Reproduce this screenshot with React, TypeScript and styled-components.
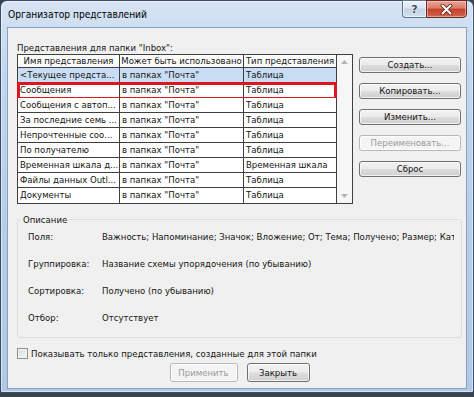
import React from "react";
import styled, { createGlobalStyle, css } from "styled-components";

const FONT = `"DejaVu Sans Condensed", "Liberation Sans", sans-serif`;
const GRID = "#3f3f3f";
const FS = "9.5px";

const Global = createGlobalStyle`
  html, body { margin: 0; padding: 0; background: #39434e; }
  body { font-family: ${FONT}; }
  #root { width: 474px; height: 397px; }
`;

const Window = styled.div`
  box-sizing: border-box;
  width: 474px;
  height: 393px;
  display: flex;
  flex-direction: column;
  padding: 0 6px 3px;
  border: 1px solid #3b4d63;
  border-radius: 7px 7px 2px 2px;
  background: linear-gradient(180deg, #d6e4f4 0%, #c2d7ee 18%, #b6cde8 60%, #b0c9e6 100%);
  box-shadow: inset 0 0 0 1px rgba(255, 255, 255, 0.5);
`;

const TitleBar = styled.div`
  height: 26px;
  display: flex;
  align-items: flex-start;
  justify-content: space-between;
`;

const Title = styled.div`
  margin-top: 7px;
  padding-left: 1px;
  font-size: 10.1px;
  line-height: 13px;
  color: #000;
`;

const CaptionButtons = styled.div`
  display: flex;
  margin-top: -1px;
`;

const CaptionButton = styled.div<{ $variant: "help" | "close" }>`
  box-sizing: border-box;
  height: 18px;
  display: flex;
  align-items: center;
  justify-content: center;
  ${({ $variant }) =>
    $variant === "help"
      ? css`
          width: 24px;
          border: 1px solid #5f7590;
          border-right: none;
          border-radius: 0 0 0 4px;
          background: linear-gradient(180deg, #eef3f9 0%, #dae4f0 45%, #c3d3e5 50%, #d2dfed 100%);
          box-shadow: inset 0 0 0 1px rgba(255, 255, 255, 0.6);
          color: #3a4d63;
          font-family: "DejaVu Sans", sans-serif;
          font-weight: bold;
          font-size: 11px;
          text-shadow: 0 0 2px #fff, 0 0 1px #fff;
        `
      : css`
          width: 41px;
          border: 1px solid #6a2a22;
          border-radius: 0 0 4px 0;
          background: linear-gradient(180deg, #eaa597 0%, #dc7c69 45%, #c4402a 50%, #d1654f 100%);
          box-shadow: inset 0 0 0 1px rgba(255, 220, 210, 0.5);
        `}
`;

const Client = styled.div`
  flex: 1;
  display: flex;
  flex-direction: column;
  border: 1px solid #86a0bf;
  background: #f0f0f0;
  padding: 13px 4px 6px 9px;
  font-size: ${FS};
  line-height: 13px;
  color: #151515;
`;

const Caption = styled.div`
  height: 13px;
  white-space: nowrap;
`;

const MainRow = styled.div`
  display: flex;
  gap: 6px;
`;

const ListView = styled.div`
  box-sizing: border-box;
  width: 336px;
  display: flex;
  border: 1px solid ${GRID};
  background: #fff;
`;

const Table = styled.div`
  display: flex;
  flex-direction: column;
  width: 319px;
`;

const COLS = "102px 124px 93px";

const HeaderRow = styled.div`
  display: grid;
  grid-template-columns: ${COLS};
  height: 13px;
  background: linear-gradient(180deg, #ffffff 0%, #f6f7f9 100%);
`;

const HeaderCell = styled.div`
  box-sizing: border-box;
  border-right: 1px solid ${GRID};
  border-bottom: 1px solid ${GRID};
  text-align: center;
  line-height: 12px;
  white-space: nowrap;
  overflow: hidden;
`;

const Row = styled.div<{ $selected?: boolean }>`
  position: relative;
  display: grid;
  grid-template-columns: ${COLS};
  height: 15px;
  background: ${({ $selected }) => ($selected ? "#c9def5" : "#fff")};
  &:last-child > div {
    border-bottom: none;
  }
`;

const Cell = styled.div`
  box-sizing: border-box;
  border-right: 1px solid ${GRID};
  border-bottom: 1px solid ${GRID};
  padding-left: 2px;
  line-height: 14px;
  white-space: nowrap;
  overflow: hidden;
`;

const Highlight = styled.div`
  position: absolute;
  top: -1px;
  bottom: -2px;
  left: -1px;
  right: 0;
  border: 3px solid #e0141e;
  pointer-events: none;
`;

const ScrollBar = styled.div`
  flex: 1;
  display: flex;
  flex-direction: column;
  justify-content: space-between;
  align-items: center;
  background: #f6f6f6;
  padding: 5px 0;
`;

const SideButtons = styled.div`
  display: flex;
  flex-direction: column;
  gap: 10px;
  padding-top: 3px;
`;

const Button = styled.button<{ $w?: number; $h?: number }>`
  box-sizing: border-box;
  width: ${({ $w }) => $w ?? 102}px;
  height: ${({ $h }) => $h ?? 16}px;
  padding: 0;
  margin: 0;
  border: 1px solid #707070;
  border-radius: 3px;
  background: linear-gradient(180deg, #f3f3f3 0%, #ebebeb 48%, #dddddd 52%, #cfcfcf 100%);
  box-shadow: inset 0 0 0 1px rgba(255, 255, 255, 0.7);
  font-family: ${FONT};
  font-size: ${FS};
  line-height: 12px;
  color: #151515;
  &:disabled {
    border-color: #b5b9bc;
    background: #f4f4f4;
    color: #9a9a9a;
  }
`;

const Group = styled.fieldset`
  margin: 9px 0 0;
  padding: 4px 0 13px 10px;
  border: 1px solid #d5dfe5;
  border-radius: 3px;
  min-width: 0;
  display: flex;
  flex-direction: column;
  gap: 14px;
`;

const Legend = styled.legend`
  padding: 0 2px;
  margin-left: -7px;
  font-size: ${FS};
  line-height: 13px;
`;

const InfoRow = styled.div`
  display: grid;
  grid-template-columns: 74px 352px;
  height: 13px;
`;

const InfoValue = styled.div`
  white-space: nowrap;
  overflow: hidden;
`;

const CheckRow = styled.label`
  margin-top: 9px;
  display: flex;
  align-items: center;
  gap: 3px;
  height: 13px;
  white-space: nowrap;
`;

const CheckBox = styled.span`
  box-sizing: border-box;
  width: 11px;
  height: 11px;
  border: 1px solid #8f8f8f;
  background: linear-gradient(135deg, #dcdcdc 0%, #f6f6f6 100%);
  box-shadow: inset 0 0 0 1px #f4f4f4;
`;

const Footer = styled.div`
  margin-top: 3px;
  display: flex;
  justify-content: center;
  gap: 9px;
`;

const rows: [string, string, string][] = [
  ["<Текущее предста...", "в папках \"Почта\"", "Таблица"],
  ["Сообщения", "в папках \"Почта\"", "Таблица"],
  ["Сообщения с автоп...", "в папках \"Почта\"", "Таблица"],
  ["За последние семь ...", "в папках \"Почта\"", "Таблица"],
  ["Непрочтенные соо...", "в папках \"Почта\"", "Таблица"],
  ["По получателю", "в папках \"Почта\"", "Таблица"],
  ["Временная шкала д...", "в папках \"Почта\"", "Временная шкала"],
  ["Файлы данных Outl...", "в папках \"Почта\"", "Таблица"],
  ["Документы", "в папках \"Почта\"", "Таблица"],
];

const info: [string, string][] = [
  ["Поля:", "Важность; Напоминание; Значок; Вложение; От; Тема; Получено; Размер; Кат"],
  ["Группировка:", "Название схемы упорядочения (по убыванию)"],
  ["Сортировка:", "Получено (по убыванию)"],
  ["Отбор:", "Отсутствует"],
];

const Arrow = ({ up }: { up?: boolean }) => (
  <svg width="7" height="4" viewBox="0 0 7 4">
    <path d={up ? "M0 4 L3.5 0 L7 4 Z" : "M0 0 L3.5 4 L7 0 Z"} fill="#b4b4b4" />
  </svg>
);

const CloseGlyph = () => (
  <svg width="13" height="11" viewBox="0 0 13 11">
    <path d="M2.5 1.5 L10.5 9.5 M10.5 1.5 L2.5 9.5" stroke="#5a1f18" strokeWidth="3.6" strokeLinecap="round" />
    <path d="M2.5 1.5 L10.5 9.5 M10.5 1.5 L2.5 9.5" stroke="#ffffff" strokeWidth="2" strokeLinecap="round" />
  </svg>
);

export default function App() {
  return (
    <>
      <Global />
      <Window>
        <TitleBar>
          <Title>Организатор представлений</Title>
          <CaptionButtons>
            <CaptionButton $variant="help">?</CaptionButton>
            <CaptionButton $variant="close">
              <CloseGlyph />
            </CaptionButton>
          </CaptionButtons>
        </TitleBar>
        <Client>
          <Caption>Представления для папки "Inbox":</Caption>
          <MainRow>
            <ListView>
              <Table>
                <HeaderRow>
                  <HeaderCell>Имя представления</HeaderCell>
                  <HeaderCell>Может быть использовано</HeaderCell>
                  <HeaderCell>Тип представления</HeaderCell>
                </HeaderRow>
                {rows.map((r, i) => (
                  <Row key={i} $selected={i === 0}>
                    <Cell>{r[0]}</Cell>
                    <Cell>{r[1]}</Cell>
                    <Cell>{r[2]}</Cell>
                    {i === 1 && <Highlight />}
                  </Row>
                ))}
              </Table>
              <ScrollBar>
                <Arrow up />
                <Arrow />
              </ScrollBar>
            </ListView>
            <SideButtons>
              <Button>Создать...</Button>
              <Button>Копировать...</Button>
              <Button>Изменить...</Button>
              <Button disabled>Переименовать...</Button>
              <Button>Сброс</Button>
            </SideButtons>
          </MainRow>
          <Group>
            <Legend>Описание</Legend>
            {info.map(([k, v]) => (
              <InfoRow key={k}>
                <span>{k}</span>
                <InfoValue>{v}</InfoValue>
              </InfoRow>
            ))}
          </Group>
          <CheckRow>
            <CheckBox />
            Показывать только представления, созданные для этой папки
          </CheckRow>
          <Footer>
            <Button disabled $w={68} $h={19}>
              Применить
            </Button>
            <Button $w={63} $h={19}>
              Закрыть
            </Button>
          </Footer>
        </Client>
      </Window>
    </>
  );
}
